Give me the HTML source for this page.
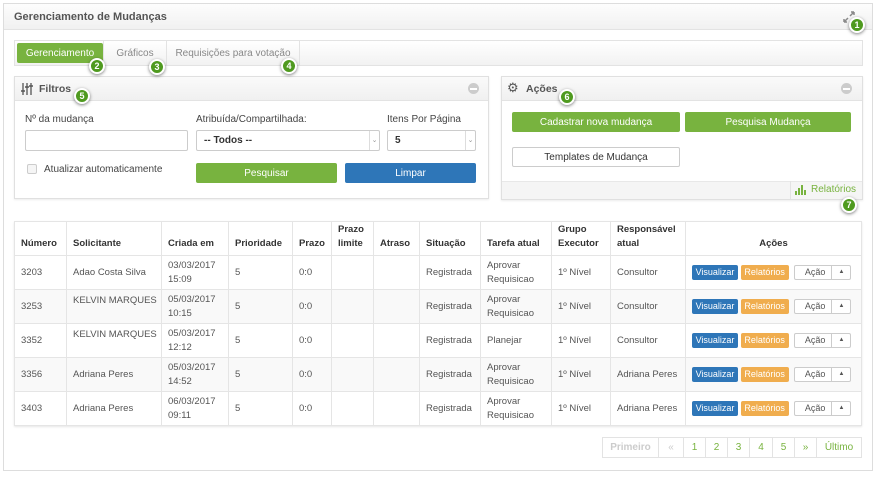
<!DOCTYPE html>
<html><head><meta charset="utf-8"><style>
*{box-sizing:border-box;margin:0;padding:0}
body{width:879px;height:477px;background:#fff;font-family:"Liberation Sans",sans-serif;font-size:10px;color:#555;position:relative;overflow:hidden}
.a{position:absolute}
.outer{left:3px;top:3px;width:870px;height:468px;border:1px solid #ddd;background:#fff}
.hdr{left:4px;top:4px;width:868px;height:26px;background:linear-gradient(#fdfdfd,#f1f1f1);border-bottom:1px solid #e3e3e3}
.title{left:14px;top:11px;font-weight:bold;font-size:11px;color:#555}
.tabs{left:14px;top:40px;width:849px;height:26px;border:1px solid #e3e3e3;background:linear-gradient(#fff,#f2f2f2)}
.tab{top:43px;height:20px;line-height:21px;font-size:10px;color:#888;text-align:center}
.panel{border:1px solid #e0e0e0;background:#fff;box-shadow:0 1px 2px rgba(0,0,0,.08)}
.ph{background:linear-gradient(#fafafa,#f0f0f0);border-bottom:1px solid #e3e3e3}
.btn{height:20px;line-height:21px;text-align:center;color:#fff;font-size:10px;border-radius:2px}
.g{background:#78b33f}.b{background:#2e76b8}
.inp{border:1px solid #ccc;border-radius:2px;background:#fff;height:21px}
.lbl{font-size:10px;color:#444}
.badge{width:16px;height:16px;border-radius:50%;background:#4f9a1f;border:2px solid #fff;box-shadow:0 1px 3px rgba(0,0,0,.5);color:#fff;font-weight:bold;font-size:9px;line-height:12px;text-align:center}
.minus{width:11px;height:11px;border-radius:50%;background:#ccc}
.minus:after{content:"";position:absolute;left:2px;top:5px;width:7px;height:1.5px;background:#fff}
table{border-collapse:collapse;table-layout:fixed;position:absolute;left:14px;top:221px;width:848px;box-shadow:0 1px 2px rgba(0,0,0,.1)}
td,th{border:1px solid #e5e5e5;font-size:9.5px;padding:0 6px;text-align:left;vertical-align:middle;color:#555;line-height:14px;white-space:nowrap;overflow:hidden}
td.w{white-space:normal}
th{font-weight:bold;color:#333;height:34px;vertical-align:bottom;padding-bottom:4px;white-space:normal}
td{height:34px}
tr:nth-child(odd) td{background:#f9f9f9}
.sb{display:inline-block;height:15px;line-height:15px;color:#fff;font-size:9px;border-radius:2px;text-align:center;vertical-align:middle}
.ac{display:inline-block;width:57px;height:15px;line-height:13px;border:1px solid #ccc;border-radius:2px;font-size:9px;color:#555;vertical-align:middle;background:#fff;position:relative}
.pg{top:437px;height:21px;line-height:19px;border:1px solid #e3e3e3;text-align:center;color:#78b33f;font-size:10px;background:#fff}
</style></head><body>
<div class="a outer"></div>
<div class="a hdr"></div>
<div class="a title">Gerenciamento de Mudanças</div>
<svg class="a" style="left:843px;top:11px" width="12" height="12" viewBox="0 0 12 12"><path d="M1 11L5 7M1 11V8M1 11H4M11 1L7 5M11 1V4M11 1H8" stroke="#888" stroke-width="1.5" fill="none"/></svg>
<div class="a tabs"></div>
<div class="a tab btn g" style="left:17px;width:86px;color:#fff">Gerenciamento</div>
<div class="a" style="left:103px;top:41px;width:1px;height:24px;background:#e3e3e3"></div>
<div class="a tab" style="left:104px;width:62px">Gráficos</div>
<div class="a" style="left:166px;top:41px;width:1px;height:24px;background:#e3e3e3"></div>
<div class="a tab" style="left:167px;width:132px">Requisições para votação</div>
<div class="a" style="left:299px;top:41px;width:1px;height:24px;background:#e3e3e3"></div>

<div class="a panel" style="left:14px;top:76px;width:475px;height:123px"></div>
<div class="a ph" style="left:15px;top:77px;width:473px;height:24px"></div>
<svg class="a" style="left:21px;top:83px" width="13" height="12" viewBox="0 0 13 12"><path d="M2 0V12M6 0V12M10 0V12" stroke="#555" stroke-width="1.3"/><path d="M0 8H4M4 4H8M8 3H12" stroke="#555" stroke-width="1.6"/></svg>
<div class="a" style="left:39px;top:83px;font-weight:bold;font-size:10.5px;color:#555">Filtros</div>
<div class="a minus" style="left:468px;top:83px"></div>
<div class="a lbl" style="left:25px;top:114px">Nº da mudança</div>
<div class="a lbl" style="left:196px;top:114px">Atribuída/Compartilhada:</div>
<div class="a lbl" style="left:387px;top:114px">Itens Por Página</div>
<div class="a inp" style="left:25px;top:130px;width:163px"></div>
<div class="a inp" style="left:196px;top:130px;width:184px;font-weight:bold;color:#333;line-height:19px;padding-left:7px">-- Todos --</div>
<div class="a" style="left:369px;top:131px;width:10px;height:19px;border-left:1px solid #ddd;font-size:7px;color:#999;line-height:19px;text-align:center">⌄</div>
<div class="a inp" style="left:387px;top:130px;width:89px;font-weight:bold;color:#333;line-height:19px;padding-left:7px">5</div>
<div class="a" style="left:465px;top:131px;width:10px;height:19px;border-left:1px solid #ddd;font-size:7px;color:#999;line-height:19px;text-align:center">⌄</div>
<div class="a" style="left:27px;top:164px;width:10px;height:10px;border:1px solid #ccc;border-radius:2px;background:#f5f5f5"></div>
<div class="a lbl" style="left:44px;top:164px">Atualizar automaticamente</div>
<div class="a btn g" style="left:196px;top:163px;width:141px">Pesquisar</div>
<div class="a btn b" style="left:345px;top:163px;width:131px">Limpar</div>

<div class="a panel" style="left:501px;top:76px;width:362px;height:124px"></div>
<div class="a ph" style="left:502px;top:77px;width:360px;height:24px"></div>
<div class="a" style="left:507px;top:80px;font-size:13px;color:#555">⚙</div>
<div class="a" style="left:526px;top:83px;font-weight:bold;font-size:10.5px;color:#555">Ações</div>
<div class="a minus" style="left:841px;top:83px"></div>
<div class="a btn g" style="left:512px;top:112px;width:168px">Cadastrar nova mudança</div>
<div class="a btn g" style="left:685px;top:112px;width:166px">Pesquisa Mudança</div>
<div class="a btn" style="left:512px;top:147px;width:168px;border:1px solid #ccc;color:#333;line-height:19px;background:#fff">Templates de Mudança</div>
<div class="a" style="left:502px;top:181px;width:360px;height:18px;background:#f5f5f5;border-top:1px solid #e8e8e8"></div>
<div class="a" style="left:790px;top:181px;width:1px;height:18px;background:#e3e3e3"></div>
<svg class="a" style="left:795px;top:184px" width="12" height="11"><path d="M0 11V7H2V11M3 11V4H5V11M6 11V1H8V11M9 11V6H11V11" fill="#78b33f"/></svg>
<div class="a" style="left:811px;top:184px;color:#78b33f;font-size:10px">Relatórios</div>

<table>
<colgroup><col style="width:52px"><col style="width:95px"><col style="width:67px"><col style="width:64px"><col style="width:39px"><col style="width:42px"><col style="width:46px"><col style="width:61px"><col style="width:71px"><col style="width:59px"><col style="width:75px"><col></colgroup>
<tr><th>Número</th><th>Solicitante</th><th>Criada em</th><th>Prioridade</th><th>Prazo</th><th>Prazo limite</th><th>Atraso</th><th>Situação</th><th>Tarefa atual</th><th>Grupo Executor</th><th>Responsável atual</th><th style="text-align:center">Ações</th></tr>
<tr><td>3203</td><td>Adao Costa Silva</td><td class="w">03/03/2017 15:09</td><td>5</td><td>0:0</td><td></td><td></td><td>Registrada</td><td class="w">Aprovar Requisicao</td><td>1º Nível</td><td>Consultor</td><td style="padding-left:6px"><span class="sb b" style="width:46px">Visualizar</span> <span class="sb" style="width:48px;background:#f0ad4e">Relatórios</span> &nbsp;<span class="ac"><span style="position:absolute;left:10px">Ação</span><span style="position:absolute;left:36px;top:-1px;height:15px;border-left:1px solid #ccc;width:20px;text-align:center;font-size:6px;line-height:15px">▲</span></span></td></tr>
<tr><td>3253</td><td style="vertical-align:top;padding-top:4px">KELVIN MARQUES</td><td class="w">05/03/2017 10:15</td><td>5</td><td>0:0</td><td></td><td></td><td>Registrada</td><td class="w">Aprovar Requisicao</td><td>1º Nível</td><td>Consultor</td><td style="padding-left:6px"><span class="sb b" style="width:46px">Visualizar</span> <span class="sb" style="width:48px;background:#f0ad4e">Relatórios</span> &nbsp;<span class="ac"><span style="position:absolute;left:10px">Ação</span><span style="position:absolute;left:36px;top:-1px;height:15px;border-left:1px solid #ccc;width:20px;text-align:center;font-size:6px;line-height:15px">▲</span></span></td></tr>
<tr><td>3352</td><td style="vertical-align:top;padding-top:4px">KELVIN MARQUES</td><td class="w">05/03/2017 12:12</td><td>5</td><td>0:0</td><td></td><td></td><td>Registrada</td><td>Planejar</td><td>1º Nível</td><td>Consultor</td><td style="padding-left:6px"><span class="sb b" style="width:46px">Visualizar</span> <span class="sb" style="width:48px;background:#f0ad4e">Relatórios</span> &nbsp;<span class="ac"><span style="position:absolute;left:10px">Ação</span><span style="position:absolute;left:36px;top:-1px;height:15px;border-left:1px solid #ccc;width:20px;text-align:center;font-size:6px;line-height:15px">▲</span></span></td></tr>
<tr><td>3356</td><td>Adriana Peres</td><td class="w">05/03/2017 14:52</td><td>5</td><td>0:0</td><td></td><td></td><td>Registrada</td><td class="w">Aprovar Requisicao</td><td>1º Nível</td><td>Adriana Peres</td><td style="padding-left:6px"><span class="sb b" style="width:46px">Visualizar</span> <span class="sb" style="width:48px;background:#f0ad4e">Relatórios</span> &nbsp;<span class="ac"><span style="position:absolute;left:10px">Ação</span><span style="position:absolute;left:36px;top:-1px;height:15px;border-left:1px solid #ccc;width:20px;text-align:center;font-size:6px;line-height:15px">▲</span></span></td></tr>
<tr><td>3403</td><td>Adriana Peres</td><td class="w">06/03/2017 09:11</td><td>5</td><td>0:0</td><td></td><td></td><td>Registrada</td><td class="w">Aprovar Requisicao</td><td>1º Nível</td><td>Adriana Peres</td><td style="padding-left:6px"><span class="sb b" style="width:46px">Visualizar</span> <span class="sb" style="width:48px;background:#f0ad4e">Relatórios</span> &nbsp;<span class="ac"><span style="position:absolute;left:10px">Ação</span><span style="position:absolute;left:36px;top:-1px;height:15px;border-left:1px solid #ccc;width:20px;text-align:center;font-size:6px;line-height:15px">▲</span></span></td></tr>
</table>

<div class="a pg" style="left:602px;width:57px;color:#ccc;font-weight:bold">Primeiro</div>
<div class="a pg" style="left:658px;width:26px;color:#ccc">«</div>
<div class="a pg" style="left:683px;width:23px">1</div>
<div class="a pg" style="left:705px;width:23px">2</div>
<div class="a pg" style="left:727px;width:23px">3</div>
<div class="a pg" style="left:749px;width:24px">4</div>
<div class="a pg" style="left:772px;width:23px">5</div>
<div class="a pg" style="left:794px;width:23px">»</div>
<div class="a pg" style="left:816px;width:46px">Último</div>

<div class="a badge" style="left:849px;top:17px">1</div>
<div class="a badge" style="left:89px;top:58px">2</div>
<div class="a badge" style="left:149px;top:59px">3</div>
<div class="a badge" style="left:281px;top:58px">4</div>
<div class="a badge" style="left:74px;top:88px">5</div>
<div class="a badge" style="left:559px;top:89px">6</div>
<div class="a badge" style="left:841px;top:197px">7</div>
</body></html>
